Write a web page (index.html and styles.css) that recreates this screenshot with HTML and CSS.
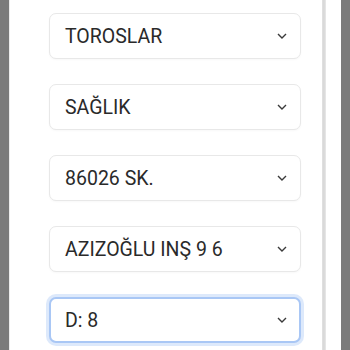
FILE: index.html
```html
<!DOCTYPE html>
<html lang="tr">
  <head>
    <meta charset="UTF-8" />
    <meta name="viewport" content="width=device-width, initial-scale=1.0" />
    <title>Adres Seçimi</title>
    <link rel="stylesheet" href="styles.css">
  </head>
  <body>
    <div class="sheet">
      <div class="form">
        <div class="select-box">
          <span>TOROSLAR</span>
          <svg class="chevron" viewBox="0 0 12 8"><path d="M2 2 6 6l4-4" /></svg>
        </div>
        <div class="select-box">
          <span>SAĞLIK</span>
          <svg class="chevron" viewBox="0 0 12 8"><path d="M2 2 6 6l4-4" /></svg>
        </div>
        <div class="select-box">
          <span>86026 SK.</span>
          <svg class="chevron" viewBox="0 0 12 8"><path d="M2 2 6 6l4-4" /></svg>
        </div>
        <div class="select-box">
          <span>AZIZOĞLU INŞ 9 6</span>
          <svg class="chevron" viewBox="0 0 12 8"><path d="M2 2 6 6l4-4" /></svg>
        </div>
        <div class="select-box focused">
          <span>D: 8</span>
          <svg class="chevron" viewBox="0 0 12 8"><path d="M2 2 6 6l4-4" /></svg>
        </div>
      </div>
      <!-- scroll rail -->
      <div class="rail"></div>
      <div class="gutter"></div>
    </div>
  </body>
</html>
```
FILE: styles.css
```css
:root {
  --backdrop: #7b7b7b;
  --white: #ffffff;
  --border: #e8e8e8;
  --text: #2a2a2a;
  --focus: #a9c7f5;
  --focus-glow: rgba(169, 199, 245, 0.4);
  --rail: #d6d6d6;
}

* {
  margin: 0;
  padding: 0;
  box-sizing: border-box;
  font-family: Roboto, "Noto Sans", sans-serif;
}

html,
body {
  height: 100%;
  overflow: hidden;
}

body {
  background-color: var(--backdrop);
  padding: 0 9px;
}

.sheet {
  display: flex;
  height: 100%;
  background-color: var(--white);
  border-left: 1px solid #ececec;
}

.form {
  flex: 1;
  display: flex;
  flex-direction: column;
  gap: 25px;
  padding: 13px 21px 0 39px;
}

.select-box {
  height: 46px;
  flex-shrink: 0;
  display: flex;
  align-items: center;
  justify-content: space-between;
  padding: 0 12px 0 15px;
  border: 1px solid var(--border);
  border-radius: 7px;
  background-color: var(--white);
  color: var(--text);
  font-size: 19.5px;
  box-shadow: 0 1px 2px rgba(0, 0, 0, 0.03);
}

.select-box.focused {
  border: 2px solid var(--focus);
  box-shadow: 0 0 0 3px var(--focus-glow);
  padding-left: 14px;
  padding-right: 11px;
}

.chevron {
  width: 12px;
  height: 8px;
  fill: none;
  stroke: #3a3a3a;
  stroke-width: 1.4;
}

.rail {
  width: 4px;
  background: linear-gradient(90deg, #e2e2e2, var(--rail), #eaeaea);
}

.gutter {
  width: 15px;
}
```
